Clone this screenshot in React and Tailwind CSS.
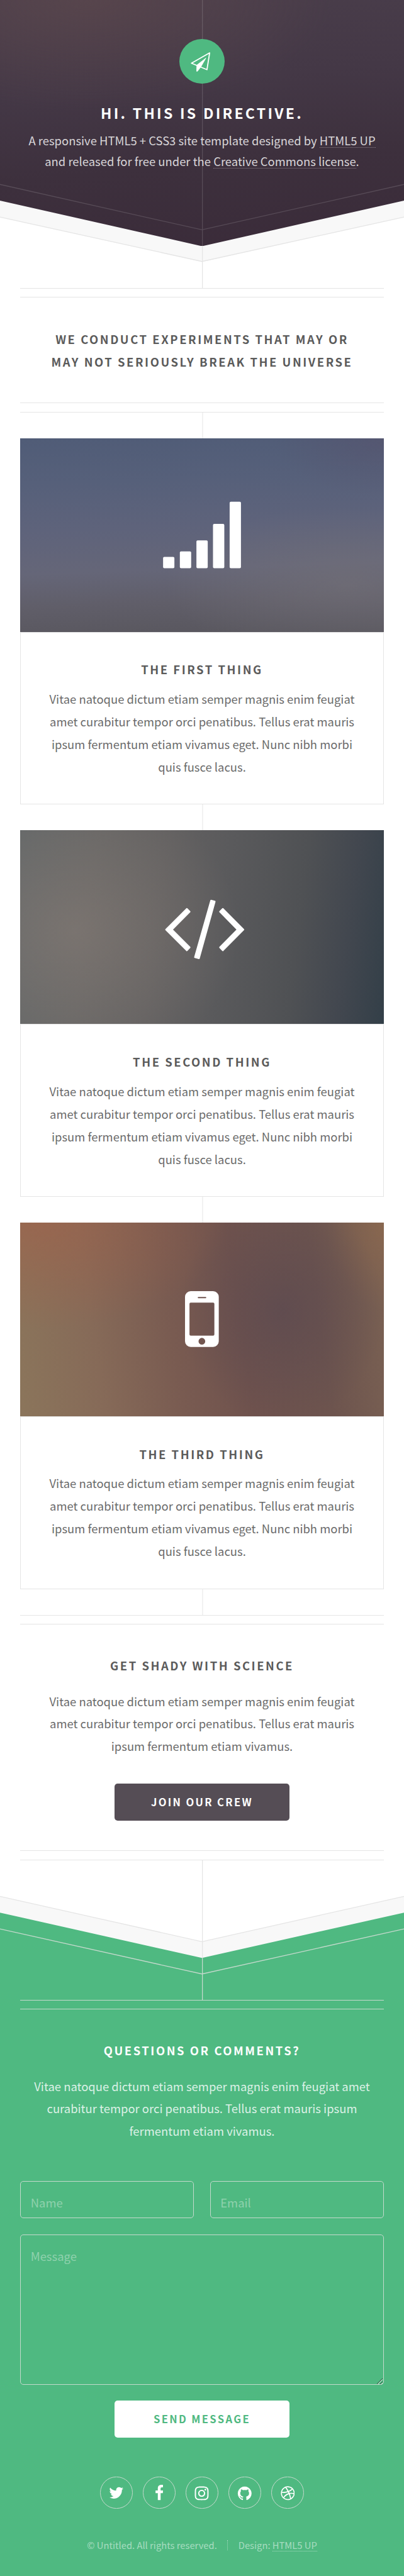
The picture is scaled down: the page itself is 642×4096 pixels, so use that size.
import React from "react";
import { FaInstagram, FaDribbble } from "react-icons/fa";

const LOREM = [
  "Vitae natoque dictum etiam semper magnis enim feugiat",
  "amet curabitur tempor orci penatibus. Tellus erat mauris",
];

function Lines({ lines, className }) {
  return (
    <p className={`whitespace-nowrap ${className}`}>
      {lines.map((line, i) => (
        <span key={i} className="block">
          {line}
        </span>
      ))}
    </p>
  );
}

function DoubleRule({ className }) {
  return <div className={`mx-[32px] h-[15.4px] shrink-0 border-y ${className}`} />;
}

function Connector({ className }) {
  return <div className={`mx-auto w-px shrink-0 translate-x-[0.5px] bg-[#e5e5e5] ${className}`} />;
}

function PlaneIcon() {
  return (
    <svg viewBox="42 42 336 336" className="h-full w-full">
      <path d="M267 145 L132 222 L247 270 Z" fill="none" stroke="#fff" strokeWidth="8.5" strokeLinejoin="round" />
      <path d="M239 184 L172 236 L170.5 282 L176 282 L202 249 Z" fill="#fff" stroke="#fff" strokeWidth="4" strokeLinejoin="round" />
    </svg>
  );
}

function Hero() {
  return (
    <header className="relative h-[458.1px] shrink-0">
      <div className="absolute inset-x-0 top-0">
        <svg viewBox="0 0 1000 714" preserveAspectRatio="none" className="block h-[458.1px] w-full">
          <path d="M0 400 V539 L500 649 L1000 539 V400 Z" fill="#f8f8f8" />
          <path d="M0 538 L500 648 L1000 538" fill="none" stroke="#e5e5e5" strokeWidth="2" />
          <path d="M501 600 V714" stroke="#e5e5e5" strokeWidth="2" />
        </svg>
      </div>
      <div className="absolute inset-x-0 top-0 h-[391.4px] bg-[radial-gradient(ellipse_60%_45%_at_22%_0%,rgba(100,76,78,0.5),transparent),linear-gradient(175deg,#4a3e4b_0%,#443846_35%,#3d303d_65%,#3a2b39_100%)] [clip-path:polygon(0_0,100%_0,100%_81.5%,50%_100%,0_81.5%)]">
        <svg viewBox="0 0 1000 610" preserveAspectRatio="none" className="block h-full w-full">
          <path d="M0 457 L500 569.5 L1000 457 M501 0 V610" fill="none" stroke="#fff" strokeOpacity="0.14" strokeWidth="2" />
        </svg>
      </div>
      <div className="relative flex flex-col items-center pt-[61.6px] text-center text-white">
        <div className="h-[71.9px] w-[71.9px] rounded-full bg-[#4fb981]">
          <PlaneIcon />
        </div>
        <h1 className="mt-[25.5px] whitespace-nowrap text-[23.06px] leading-[40px] font-bold tracking-[3.24px]">
          HI. THIS IS DIRECTIVE.
        </h1>
        <p className="mt-[8px] whitespace-nowrap text-[18.45px] leading-[33.4px] text-[#d8d5d8]">
          <span className="block">
            A responsive HTML5 + CSS3 site template designed by{" "}
            <a className="relative">
              HTML5 UP
              <span className="absolute inset-x-0 bottom-[1px] border-b border-dotted border-[#8b8089]" />
            </a>
          </span>
          <span className="block">
            and released for free under the{" "}
            <a className="relative">
              Creative Commons license
              <span className="absolute inset-x-0 bottom-[1px] border-b border-dotted border-[#8b8089]" />
            </a>
            .
          </span>
        </p>
      </div>
    </header>
  );
}

function BarsArt() {
  const bars = [
    [353.7, 293.8],
    [395.2, 280],
    [436.2, 253],
    [477.2, 212],
    [518.4, 157],
  ];
  return bars.map(([x, y]) => <rect key={x} x={x} y={y} width="28" height={321.8 - y} rx="3" />);
}

function CodeArt() {
  return (
    <g stroke="#fff" strokeWidth="4" strokeLinejoin="round">
      <path d="M361 246.3 L412.5 195 L419.5 202 L375.5 246.3 L419.5 290.5 L412.5 298 Z" />
      <path d="M552.5 246.3 L501.5 195 L494.5 202 L538 246.3 L494.5 290.5 L501.5 298 Z" />
      <path d="M472.5 174.5 L481.5 177 L442.5 317.5 L432.5 315 Z" />
    </g>
  );
}

function PhoneArt() {
  return (
    <path
      fillRule="evenodd"
      d="M422 170 H477.5 A14 14 0 0 1 491.5 184 V294 A14 14 0 0 1 477.5 308 H422 A14 14 0 0 1 408 294 V184 A14 14 0 0 1 422 170 Z M422 198.4 A3 3 0 0 0 419 201.4 V277 A3 3 0 0 0 422 280 H477.6 A3 3 0 0 0 480.6 277 V201.4 A3 3 0 0 0 477.6 198.4 Z M441 184.3 A1.2 1.2 0 0 0 441 187.3 H459 A1.2 1.2 0 0 0 459 184.3 Z M441.4 294 A8.3 8.3 0 1 0 458 294 A8.3 8.3 0 1 0 441.4 294 Z"
    />
  );
}

function Feature({ title, art, backdrop }) {
  return (
    <section className="mx-[32px] h-[582.6px] shrink-0">
      <div className={`h-[308px] ${backdrop}`}>
        <svg viewBox="0 0 900 480" preserveAspectRatio="none" fill="#fff" className="block h-full w-full">
          {art}
        </svg>
      </div>
      <div className="h-[274.6px] border border-[#e5e5e5] pt-[41.7px] text-center">
        <h3 className="text-[18.45px] leading-[35.9px] font-bold tracking-[2.54px] text-[#5b5b5b]">{title}</h3>
        <Lines
          className="mt-[10.7px] text-[18.45px] leading-[35.95px] text-[#6b6b6b]"
          lines={[...LOREM, "ipsum fermentum etiam vivamus eget. Nunc nibh morbi", "quis fusce lacus."]}
        />
      </div>
    </section>
  );
}

function SocialLink({ children }) {
  return (
    <li className="flex h-[51.4px] w-[51.4px] items-center justify-center rounded-full border border-[#c4d9cc] text-white">
      {children}
    </li>
  );
}

const FIELD =
  "block rounded-[5px] border border-[#c4d9cc] bg-transparent px-[15.4px] text-[18.45px] text-white outline-none placeholder:text-[#8fd1ad] placeholder:opacity-100";

export default function App() {
  return (
    <div className="flex h-[4096px] w-[642px] flex-col overflow-hidden bg-white font-['Noto_Sans_CJK_JP','Noto_Sans_CJK_SC','Noto_Sans',sans-serif]">
      <Hero />

      <DoubleRule className="border-[#e5e5e5]" />
      <div className="h-[166.8px] shrink-0 pt-[48.3px] text-center">
        <Lines
          className="text-[18.45px] leading-[35.9px] font-bold tracking-[2.54px] text-[#5b5b5b]"
          lines={["WE CONDUCT EXPERIMENTS THAT MAY OR", "MAY NOT SERIOUSLY BREAK THE UNIVERSE"]}
        />
      </div>
      <DoubleRule className="border-[#e5e5e5]" />
      <Connector className="h-[41.1px]" />

      <Feature
        title="THE FIRST THING"
        art={<BarsArt />}
        backdrop="bg-[radial-gradient(ellipse_50%_40%_at_90%_75%,rgba(118,115,122,0.55),transparent),radial-gradient(ellipse_30%_30%_at_100%_0%,rgba(86,82,108,0.6),transparent),linear-gradient(178deg,#505c77_0%,#56607a_22%,#5e637b_45%,#656678_66%,#605e69_82%,#58565d_100%)]"
      />
      <Connector className="h-[41px]" />
      <Feature
        title="THE SECOND THING"
        art={<CodeArt />}
        backdrop="bg-[radial-gradient(ellipse_45%_75%_at_15%_52%,rgba(134,124,118,0.6),transparent),linear-gradient(97deg,#636768_0%,#676665_20%,#636161_38%,#5a5a5c_55%,#4f5154_75%,#42474f_88%,#333f48_100%)]"
      />
      <Connector className="h-[41px]" />
      <Feature
        title="THE THIRD THING"
        art={<PhoneArt />}
        backdrop="bg-[radial-gradient(ellipse_28%_60%_at_72%_45%,rgba(92,74,80,0.75),transparent),radial-gradient(ellipse_16%_45%_at_100%_0%,rgba(150,108,76,0.5),transparent),radial-gradient(ellipse_52%_55%_at_5%_0%,rgba(160,98,74,0.65),transparent),linear-gradient(82deg,#8b755b_0%,#866a58_22%,#795b51_42%,#6f524d_60%,#6d544e_80%,#7b6253_100%)]"
      />
      <Connector className="h-[41.2px]" />

      <DoubleRule className="border-[#e5e5e5]" />
      <section className="flex h-[359.1px] shrink-0 flex-col items-center pt-[47.6px] text-center">
        <h3 className="text-[18.45px] leading-[35.9px] font-bold tracking-[2.54px] text-[#5b5b5b]">GET SHADY WITH SCIENCE</h3>
        <Lines
          className="mt-[20.9px] text-[18.45px] leading-[35.9px] text-[#6b6b6b]"
          lines={[...LOREM, "ipsum fermentum etiam vivamus."]}
        />
        <button className="mt-[40.6px] h-[59px] w-[277.2px] shrink-0 rounded-[5px] bg-[#554d55] text-[16.6px] leading-[57px] font-bold tracking-[2.34px] text-white">
          JOIN OUR CREW
        </button>
      </section>
      <DoubleRule className="border-[#e5e5e5]" />

      <svg viewBox="0 4610 1000 346" preserveAspectRatio="none" className="block h-[222px] w-full shrink-0">
        <path d="M0 4699 L500 4812 L1000 4699 V4760 L500 4870 L0 4760 Z" fill="#f8f8f8" />
        <path d="M0 4699.5 L500 4811.5 L1000 4699.5" fill="none" stroke="#e5e5e5" strokeWidth="2" />
        <path d="M0 4739.7 L500 4852 L1000 4739.7 V4960 H0 Z" fill="#4fb981" />
        <path d="M501 4610 V4852" stroke="#e5e5e5" strokeWidth="2" />
        <path d="M0 4780 L500 4891.7 L1000 4780 M501 4852 V4956" fill="none" stroke="#c4d9cc" strokeWidth="2" />
      </svg>

      <footer className="flex grow flex-col items-center bg-[#4fb981] text-center">
        <DoubleRule className="w-[578px] border-[#c4d9cc]" />
        <h3 className="mt-[48px] text-[18.45px] leading-[35.9px] font-bold tracking-[2.54px] text-white">QUESTIONS OR COMMENTS?</h3>
        <Lines
          className="mt-[20.6px] text-[18.45px] leading-[35.9px] text-[#dcf1e6]"
          lines={[
            "Vitae natoque dictum etiam semper magnis enim feugiat amet",
            "curabitur tempor orci penatibus. Tellus erat mauris ipsum",
            "fermentum etiam vivamus.",
          ]}
        />
        <form className="mt-[61px] flex w-[577.4px] flex-col items-center">
          <div className="flex w-full gap-[25.7px]">
            <input placeholder="Name" className={`h-[59px] min-w-0 flex-1 pt-[8px] ${FIELD}`} />
            <input placeholder="Email" className={`h-[59px] min-w-0 flex-1 pt-[8px] ${FIELD}`} />
          </div>
          <div className="relative mt-[25.7px] w-full">
            <textarea placeholder="Message" className={`h-[238.7px] w-full resize-none overflow-hidden pt-[15.6px] leading-[35.9px] ${FIELD}`} />
            <svg viewBox="0 0 14 14" className="absolute right-[2px] bottom-[1px] h-[9px] w-[9px]">
              <path d="M0 14 L14 0 M8 14 L14 8" stroke="#24543b" strokeWidth="1.6" />
              <path d="M2 14 L14 2 M10.5 14 L14 10.5" stroke="#d3e8dc" strokeWidth="1.6" />
            </svg>
          </div>
          <button type="button" className="mt-[25.6px] h-[59px] w-[277.2px] rounded-[5px] bg-white text-[16.6px] leading-[57px] font-bold tracking-[2.34px] text-[#4fb981]">
            SEND MESSAGE
          </button>
        </form>
        <ul className="mt-[61.6px] flex gap-[16.7px]">
          <SocialLink>
            <svg viewBox="0 0 1792 1792" fill="currentColor" className="h-[25.6px] w-[25.6px]">
              <path d="M1684 408q-67 98-162 167 1 14 1 42 0 130-38 259.5t-115.5 248.5-184.5 210.5-258 146-323 54.5q-271 0-496-145 35 4 78 4 225 0 401-138-105-2-188-64.5t-114-159.5q33 5 61 5 43 0 85-11-112-23-185.5-111.5t-73.5-205.5v-4q68 38 146 41-66-44-105-115t-39-154q0-88 44-163 121 149 294.5 238.5t371.5 99.5q-8-38-8-74 0-134 94.5-228.5t228.5-94.5q140 0 236 102 109-21 205-78-37 115-142 178 93-10 186-50z" />
            </svg>
          </SocialLink>
          <SocialLink>
            <svg viewBox="0 0 264 512" fill="currentColor" className="h-[24.2px] w-[12.8px]">
              <path d="M76.7 512V283H0v-91h76.7v-71.7C76.7 42.4 124.3 0 193.8 0c33.3 0 61.9 2.5 70.2 3.6V85h-48.2c-37.8 0-45.1 18-45.1 44.3V192H256l-11.7 91h-73.6v229" />
            </svg>
          </SocialLink>
          <SocialLink>
            <FaInstagram className="mt-[2px] text-[25px]" />
          </SocialLink>
          <SocialLink>
            <svg viewBox="0 0 1792 1792" fill="currentColor" className="mt-[2px] h-[25.6px] w-[25.6px]">
              <path d="M896 128q209 0 385.5 103t279.5 279.5 103 385.5q0 251-146.5 451.5t-378.5 277.5q-27 5-40-7t-13-30q0-3 .5-76.5t.5-134.5q0-97-52-142 57-6 102.5-18t94-39 81-66.5 53-105 20.5-150.5q0-119-79-206 37-91-8-204-28-9-81 11t-92 44l-38 24q-93-26-192-26t-192 26q-16-11-42.5-27t-83.5-38.5-85-13.5q-45 113-8 204-79 87-79 206 0 85 20.5 150t52.5 105 80.5 67 94 39 102.5 18q-39 36-49 103-21 10-45 15t-57 5-65.5-21.5-55.5-62.5q-19-32-48.5-52t-49.5-24l-20-3q-21 0-29 4.5t-5 11.5 9 14 13 12l7 5q22 10 43.5 38t31.5 51l10 23q13 38 44 61.5t67 30 69.5 7 55.5-3.5l23-4q0 38 .5 88.5t.5 54.5q0 18-13 30t-40 7q-232-77-378.5-277.5t-146.5-451.5q0-209 103-385.5t279.5-279.5 385.5-103z" />
            </svg>
          </SocialLink>
          <SocialLink>
            <FaDribbble className="mt-[2px] text-[22.7px]" />
          </SocialLink>
        </ul>
        <div className="mt-[40px] flex items-center text-[14.75px] leading-[36px] text-[#a7dcc0]">
          <span>© Untitled. All rights reserved.</span>
          <span className="ml-[16px] h-[15.4px] border-l border-dotted border-[#a7dcc0]" />
          <span className="ml-[17px]">
            Design:{" "}
            <a className="relative">
              HTML5 UP
              <span className="absolute inset-x-0 bottom-0 border-b border-dotted border-[#a7dcc0]" />
            </a>
          </span>
        </div>
      </footer>
    </div>
  );
}
